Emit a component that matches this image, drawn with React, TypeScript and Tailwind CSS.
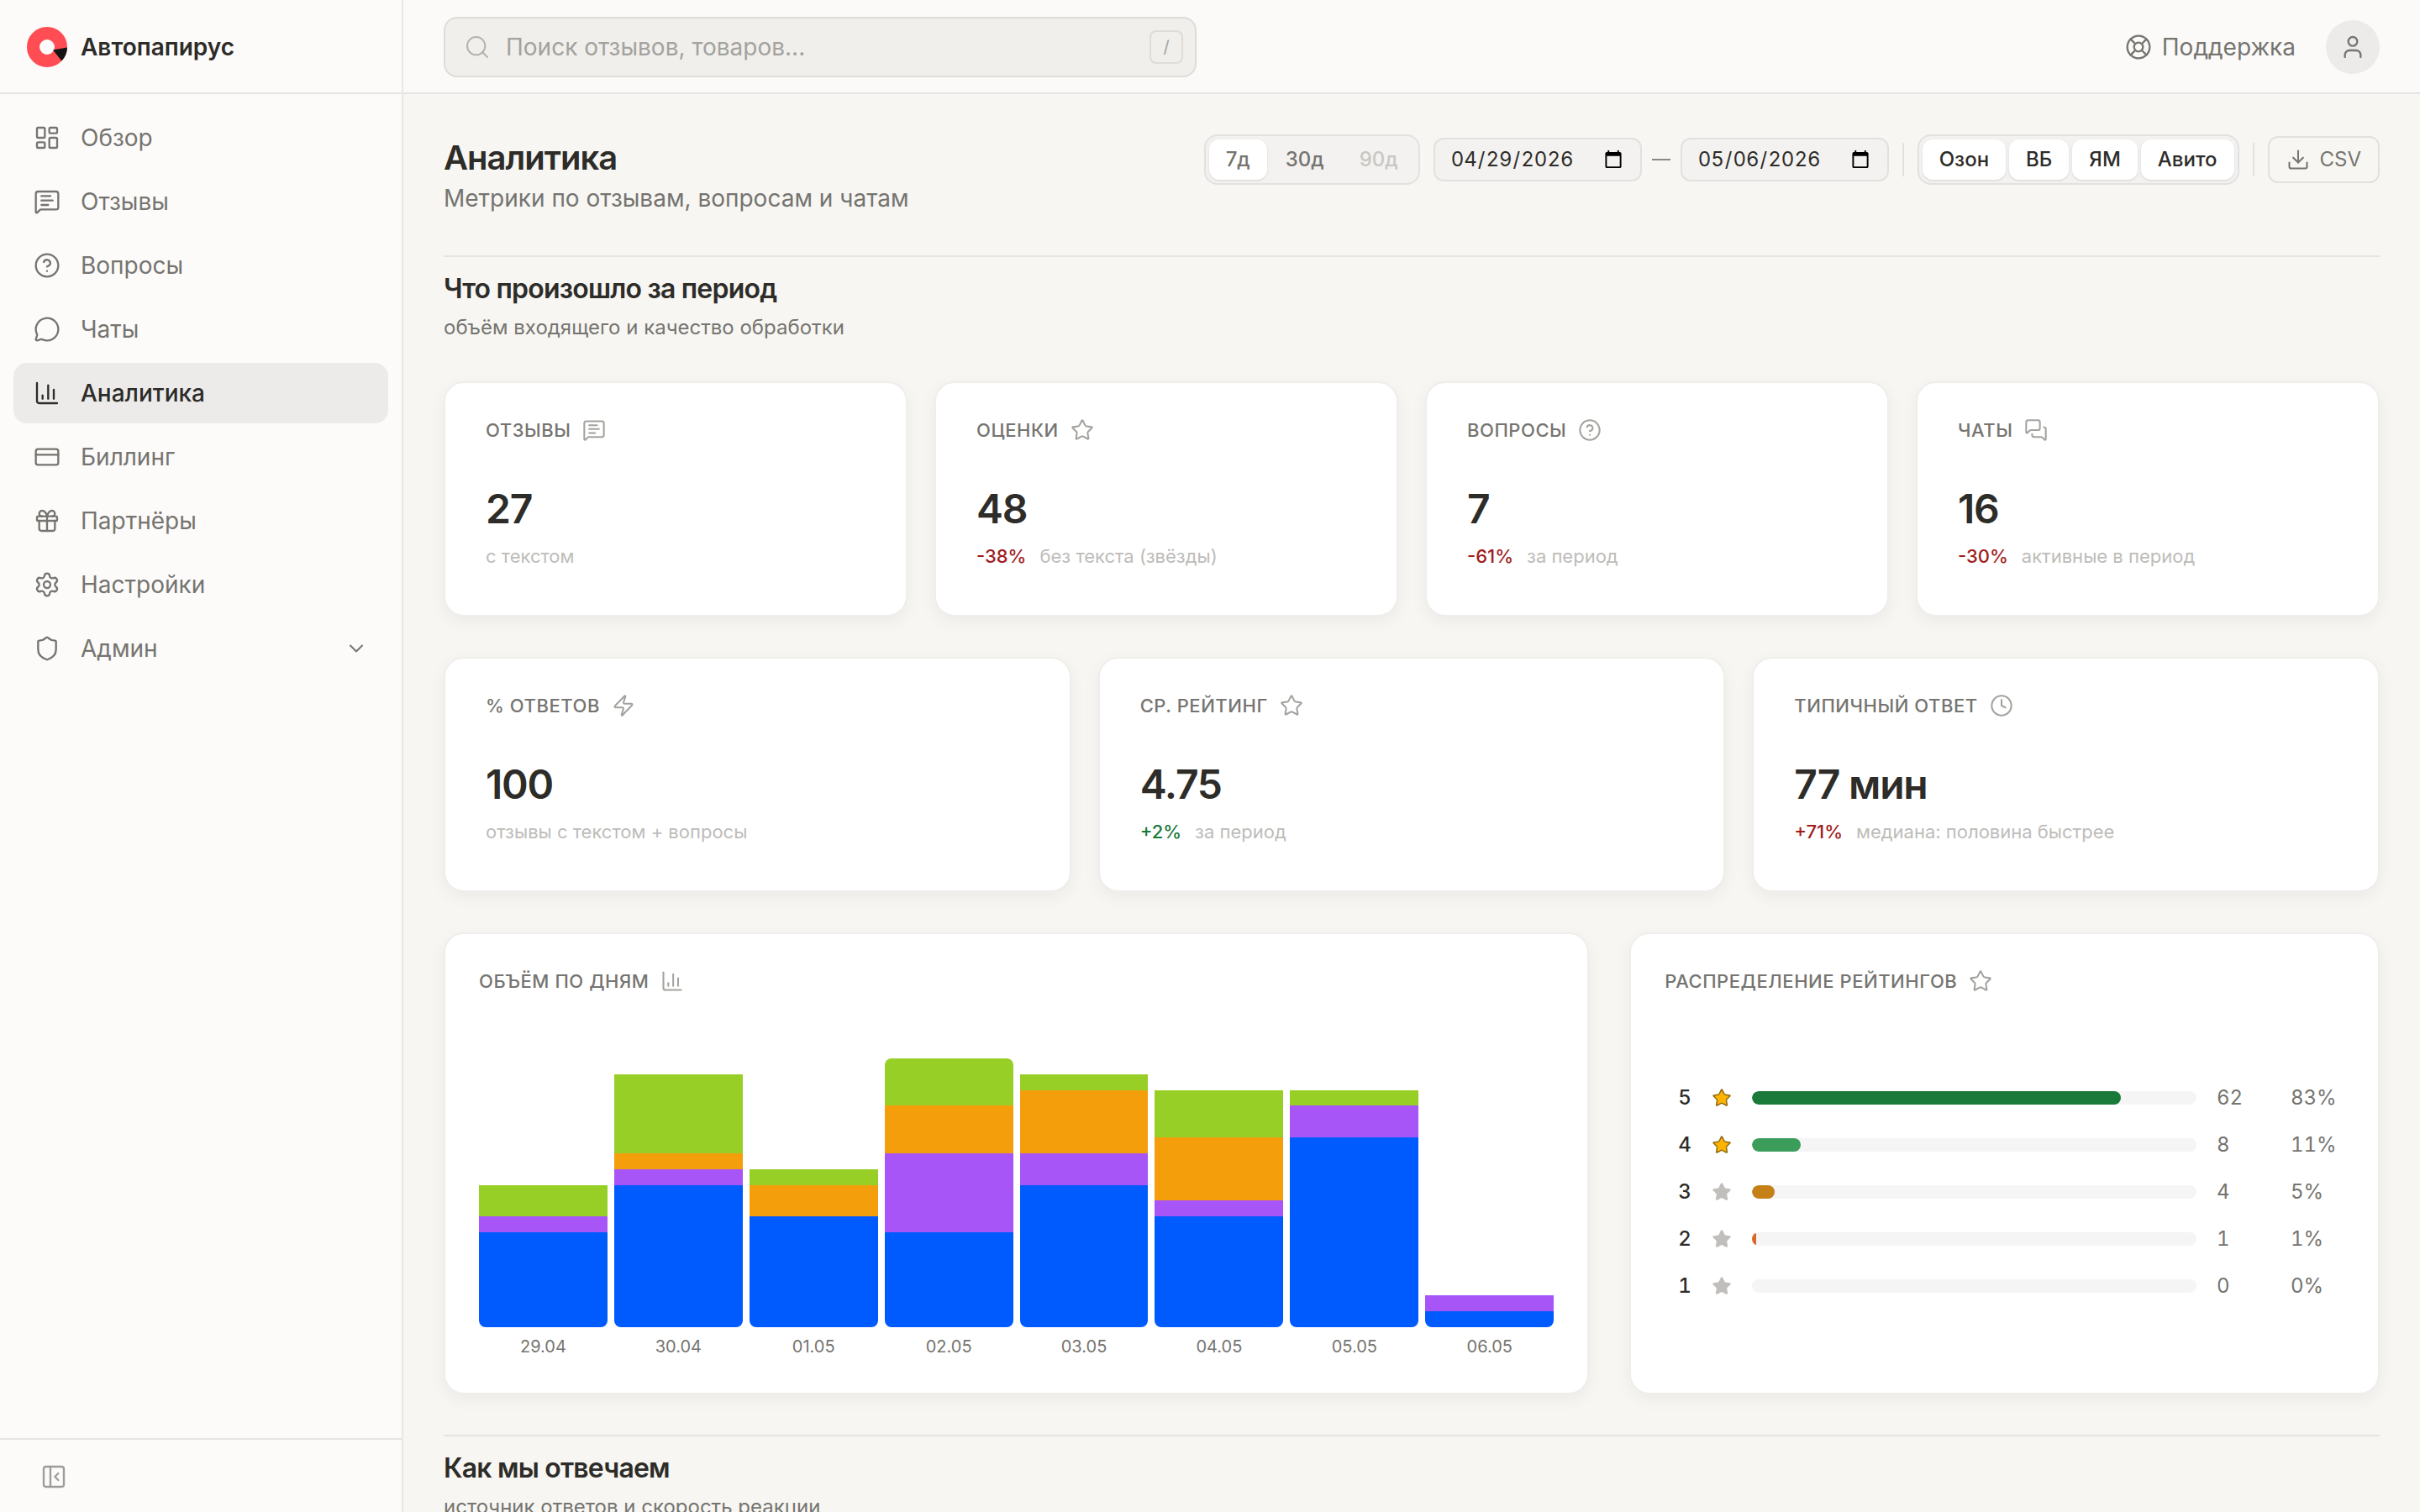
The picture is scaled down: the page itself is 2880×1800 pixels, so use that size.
import { useState } from "react";
import {
  ChartColumn,
  ChevronDown,
  CircleQuestionMark,
  Clock,
  CreditCard,
  Download,
  Gift,
  LayoutDashboard,
  LifeBuoy,
  MessageCircle,
  MessageSquareText,
  MessagesSquare,
  PanelLeftClose,
  Search,
  Settings,
  Shield,
  Star,
  User,
  Zap,
  type LucideIcon,
} from "lucide-react";
import clsx from "clsx";

const navItems: { label: string; icon: LucideIcon; active?: boolean; expandable?: boolean }[] = [
  { label: "Обзор", icon: LayoutDashboard },
  { label: "Отзывы", icon: MessageSquareText },
  { label: "Вопросы", icon: CircleQuestionMark },
  { label: "Чаты", icon: MessageCircle },
  { label: "Аналитика", icon: ChartColumn, active: true },
  { label: "Биллинг", icon: CreditCard },
  { label: "Партнёры", icon: Gift },
  { label: "Настройки", icon: Settings },
  { label: "Админ", icon: Shield, expandable: true },
];

type Stat = {
  label: string;
  icon: LucideIcon;
  value: string;
  hint: string;
  delta?: string;
  good?: boolean;
};

const volumeStats: Stat[] = [
  { label: "Отзывы", icon: MessageSquareText, value: "27", hint: "с текстом" },
  { label: "Оценки", icon: Star, value: "48", delta: "-38%", hint: "без текста (звёзды)" },
  { label: "Вопросы", icon: CircleQuestionMark, value: "7", delta: "-61%", hint: "за период" },
  { label: "Чаты", icon: MessagesSquare, value: "16", delta: "-30%", hint: "активные в период" },
];

const qualityStats: Stat[] = [
  { label: "% ответов", icon: Zap, value: "100", hint: "отзывы с текстом + вопросы" },
  { label: "Ср. рейтинг", icon: Star, value: "4.75", delta: "+2%", good: true, hint: "за период" },
  { label: "Типичный ответ", icon: Clock, value: "77 мин", delta: "+71%", hint: "медиана: половина быстрее" },
];

// ozon / wb / ym / avito counts per day
const days = [
  { date: "29.04", ozon: 6, wb: 1, ym: 0, avito: 2 },
  { date: "30.04", ozon: 9, wb: 1, ym: 1, avito: 5 },
  { date: "01.05", ozon: 7, wb: 0, ym: 2, avito: 1 },
  { date: "02.05", ozon: 6, wb: 5, ym: 3, avito: 3 },
  { date: "03.05", ozon: 9, wb: 2, ym: 4, avito: 1 },
  { date: "04.05", ozon: 7, wb: 1, ym: 4, avito: 3 },
  { date: "05.05", ozon: 12, wb: 2, ym: 0, avito: 1 },
  { date: "06.05", ozon: 1, wb: 1, ym: 0, avito: 0 },
];
const maxTotal = Math.max(...days.map((d) => d.ozon + d.wb + d.ym + d.avito));

const ratings = [
  { stars: 5, count: 62, percent: 83, bar: "bg-[#1a7a3a]" },
  { stars: 4, count: 8, percent: 11, bar: "bg-[#3c9d5b]" },
  { stars: 3, count: 4, percent: 5, bar: "bg-[#c58117]" },
  { stars: 2, count: 1, percent: 1, bar: "bg-[#d9692b]" },
  { stars: 1, count: 0, percent: 0, bar: "bg-[#a11d1d]" },
];

function Logo() {
  return (
    <svg viewBox="0 0 48 48" className="size-12" aria-hidden="true">
      <circle cx="24" cy="24" r="16.5" fill="none" stroke="#ff4d53" strokeWidth="15" />
      <path d="M31 27.5 48 24.5a24 24 0 0 1-6.6 16z" fill="#141414" />
    </svg>
  );
}

function Sidebar() {
  return (
    <aside className="flex w-[480px] shrink-0 flex-col border-r-2 border-[#e8e7e5] bg-[#fcfbf9]">
      <a href="#" className="flex h-28 items-center gap-4 border-b-2 border-[#e5e4e2] px-8 pt-0.5 text-[28px] font-semibold text-[#2d2c29]">
        <Logo />
        Автопапирус
      </a>
      <nav className="flex flex-1 flex-col gap-1 p-4">
        {navItems.map(({ label, icon: Icon, active, expandable }) => (
          <a
            key={label}
            href="#"
            className={clsx(
              "flex h-[72px] items-center gap-6 rounded-2xl px-6 text-[28px]",
              active ? "bg-[#ecebe9] font-medium text-[#2d2c29]" : "text-[#757470]"
            )}
          >
            <Icon size={32} strokeWidth={1.75} />
            {label}
            {expandable && <ChevronDown size={28} strokeWidth={1.75} className="ml-auto" />}
          </a>
        ))}
      </nav>
      <div className="flex h-[88px] items-center border-t-2 border-[#e5e4e2] px-12 pt-0.5">
        <button type="button" aria-label="Свернуть меню" className="text-[#9d9c98]">
          <PanelLeftClose size={32} strokeWidth={1.75} />
        </button>
      </div>
    </aside>
  );
}

function TopBar() {
  return (
    <header className="flex h-28 shrink-0 items-center justify-between border-b-2 border-[#e5e4e2] bg-[#fbfaf8] px-12 pt-0.5">
      <label className="flex h-[72px] w-full max-w-4xl items-center gap-[18px] rounded-2xl border-2 border-[#dddcd9] bg-[#f0efec] pr-3.5 pl-[22px]">
        <Search size={32} strokeWidth={1.5} className="shrink-0 text-[#b4b3af]" />
        <input
          type="search"
          aria-label="Поиск"
          placeholder="Поиск отзывов, товаров..."
          className="min-w-0 flex-1 bg-transparent text-[28px] outline-none placeholder:text-[#a3a29e]"
        />
        <kbd className="flex size-10 items-center justify-center rounded-lg border-2 border-[#dddcd9] font-[Inter,sans-serif] text-xl text-[#a3a29e]">
          /
        </kbd>
      </label>
      <div className="flex items-center gap-9">
        <a href="#" className="flex items-center gap-3 text-[28px] text-[#757470]">
          <LifeBuoy size={32} strokeWidth={1.75} />
          Поддержка
        </a>
        <button
          type="button"
          aria-label="Профиль"
          className="flex size-16 items-center justify-center rounded-full bg-[#ecebe9] text-[#757470]"
        >
          <User size={32} strokeWidth={1.75} />
        </button>
      </div>
    </header>
  );
}

function DateField({ label, initial }: { label: string; initial: string }) {
  const [value, setValue] = useState(initial);
  return (
    <input
      type="date"
      aria-label={label}
      value={value}
      onChange={(e) => setValue(e.target.value)}
      className="h-[52px] w-[248px] rounded-xl border-2 border-[#e2e1df] bg-[#f3f2f0] px-[18px] text-2xl text-[#2d2c29] tabular-nums"
    />
  );
}

function Filters() {
  const [period, setPeriod] = useState("7д");
  const [shops, setShops] = useState(["Озон", "ВБ", "ЯМ", "Авито"]);

  const toggleShop = (shop: string) =>
    setShops((prev) => (prev.includes(shop) ? prev.filter((s) => s !== shop) : [...prev, shop]));

  return (
    <div className="flex items-center gap-4 text-2xl">
      <div className="flex gap-0.5 rounded-2xl border-2 border-[#e2e1df] bg-[#f3f2f0] p-1 font-medium">
        {["7д", "30д", "90д"].map((p) => (
          <button
            key={p}
            type="button"
            disabled={p === "90д"}
            onClick={() => setPeriod(p)}
            className={clsx(
              "h-12 rounded-xl px-5 text-[#757470] disabled:text-[#c8c7c4]",
              period === p && "bg-white text-[#2d2c29] shadow-sm"
            )}
          >
            {p}
          </button>
        ))}
      </div>
      <div className="flex items-center gap-3">
        <DateField label="Начало периода" initial="2026-04-29" />
        <span className="h-0.5 w-[22px] bg-[#8a8985]" />
        <DateField label="Конец периода" initial="2026-05-06" />
      </div>
      <div className="h-10 w-0.5 bg-[#e2e1df]" />
      <div className="flex gap-1 rounded-2xl border-2 border-[#e2e1df] bg-[#f3f2f0] p-1 font-medium">
        {["Озон", "ВБ", "ЯМ", "Авито"].map((shop) => (
          <button
            key={shop}
            type="button"
            aria-pressed={shops.includes(shop)}
            onClick={() => toggleShop(shop)}
            className={clsx(
              "h-12 rounded-xl px-5",
              shops.includes(shop) ? "bg-white text-[#2d2c29] shadow-sm" : "text-[#757470]"
            )}
          >
            {shop}
          </button>
        ))}
      </div>
      <div className="h-10 w-0.5 bg-[#e2e1df]" />
      <button
        type="button"
        className="flex h-14 items-center gap-3 rounded-xl border-2 border-[#e2e1df] px-5 text-[#757470]"
      >
        <Download size={28} strokeWidth={1.75} />
        CSV
      </button>
    </div>
  );
}

function SectionHeading({ title, hint }: { title: string; hint: string }) {
  return (
    <div className="border-t-2 border-[#e5e4e2] pt-[18px]">
      <h2 className="text-[32px] leading-10 font-semibold tracking-tight text-[#2d2c29]">{title}</h2>
      <p className="mt-2 text-2xl leading-9 text-[#757470]">{hint}</p>
    </div>
  );
}

function CardLabel({ label, icon: Icon }: { label: string; icon: LucideIcon }) {
  return (
    <h3 className="flex items-center gap-3.5 text-[22px] leading-8 font-medium tracking-wide text-[#757470] uppercase">
      {label}
      <Icon size={28} strokeWidth={1.75} className="text-[#a3a29e]" />
    </h3>
  );
}

function StatCard({ label, icon, value, hint, delta, good }: Stat) {
  return (
    <div className="h-[280px] rounded-3xl border-2 border-[#efeeec] bg-white px-12 py-10 shadow-[0_6px_20px_rgba(0,0,0,0.05)]">
      <CardLabel label={label} icon={icon} />
      <p className="mt-[46px] text-5xl leading-[64px] font-semibold tracking-tight text-[#2d2c29]">{value}</p>
      <p className="mt-2 flex gap-4 text-[22px] leading-8 text-[#bdbcb9]">
        {delta && (
          <span className={clsx("font-medium", good ? "text-[#1a7a3a]" : "text-[#a11d1d]")}>{delta}</span>
        )}
        {hint}
      </p>
    </div>
  );
}

function VolumeCard() {
  return (
    <div className="col-span-3 rounded-3xl border-2 border-[#efeeec] bg-white p-10 shadow-[0_6px_20px_rgba(0,0,0,0.05)]">
      <CardLabel label="Объём по дням" icon={ChartColumn} />
      <div className="mt-[76px] grid grid-cols-8 gap-2">
        {days.map((d) => (
          <div key={d.date}>
            <div className="flex h-80 flex-col justify-end overflow-hidden rounded-lg">
              <div className="bg-[#97cf26]" style={{ height: `${(d.avito / maxTotal) * 100}%` }} />
              <div className="bg-[#f59e0b]" style={{ height: `${(d.ym / maxTotal) * 100}%` }} />
              <div className="bg-[#a855f7]" style={{ height: `${(d.wb / maxTotal) * 100}%` }} />
              <div className="bg-[#005bff]" style={{ height: `${(d.ozon / maxTotal) * 100}%` }} />
            </div>
            <p className="mt-2 text-center text-xl leading-[30px] text-[#757470]">{d.date}</p>
          </div>
        ))}
      </div>
    </div>
  );
}

function RatingsCard() {
  return (
    <div className="col-span-2 flex flex-col rounded-3xl border-2 border-[#efeeec] bg-white p-10 shadow-[0_6px_20px_rgba(0,0,0,0.05)]">
      <CardLabel label="Распределение рейтингов" icon={Star} />
      <div className="flex flex-1 flex-col justify-center pt-9">
        <table className="w-full table-fixed text-2xl text-[#757470] tabular-nums">
          <colgroup>
            <col className="w-14" />
            <col className="w-6" />
            <col />
            <col className="w-[88px]" />
            <col className="w-16" />
          </colgroup>
          <tbody>
            {ratings.map((r) => (
              <tr key={r.stars} className="h-14">
                <th scope="row" className="pl-4 text-left font-medium text-[#2d2c29]">
                  {r.stars}
                </th>
                <td>
                  <Star
                    size={24}
                    strokeWidth={1.5}
                    className={r.stars >= 4 ? "fill-[#ffb400] text-[#8f6a12]" : "fill-[#c0bfbc] text-[#c0bfbc]"}
                  />
                </td>
                <td className="px-6">
                  <div className="h-4 overflow-hidden rounded-full bg-[#f5f5f5]">
                    <div className={clsx("h-full rounded-full", r.bar)} style={{ width: `${r.percent}%` }} />
                  </div>
                </td>
                <td>{r.count}</td>
                <td>{r.percent}%</td>
              </tr>
            ))}
          </tbody>
        </table>
      </div>
    </div>
  );
}

export default function App() {
  return (
    <div className="flex h-screen overflow-hidden bg-[#f7f6f2] font-[Inter,'Noto_Sans',sans-serif]">
      <Sidebar />
      <div className="flex min-w-0 flex-1 flex-col">
        <TopBar />
        <main className="flex-1 overflow-hidden px-12 pt-12">
          <div className="flex items-start justify-between">
            <div>
              <h1 className="text-[40px] leading-[56px] font-semibold tracking-tight text-[#2d2c29]">Аналитика</h1>
              <p className="text-[28px] leading-10 text-[#757470]">Метрики по отзывам, вопросам и чатам</p>
            </div>
            <Filters />
          </div>
          <section className="mt-12">
            <SectionHeading title="Что произошло за период" hint="объём входящего и качество обработки" />
            <div className="mt-[46px] grid grid-cols-4 gap-8">
              {volumeStats.map((s) => (
                <StatCard key={s.label} {...s} />
              ))}
            </div>
            <div className="mt-12 grid grid-cols-3 gap-8">
              {qualityStats.map((s) => (
                <StatCard key={s.label} {...s} />
              ))}
            </div>
            <div className="mt-12 grid grid-cols-5 gap-12">
              <VolumeCard />
              <RatingsCard />
            </div>
          </section>
          <section className="mt-12">
            <SectionHeading title="Как мы отвечаем" hint="источник ответов и скорость реакции" />
          </section>
        </main>
      </div>
    </div>
  );
}
